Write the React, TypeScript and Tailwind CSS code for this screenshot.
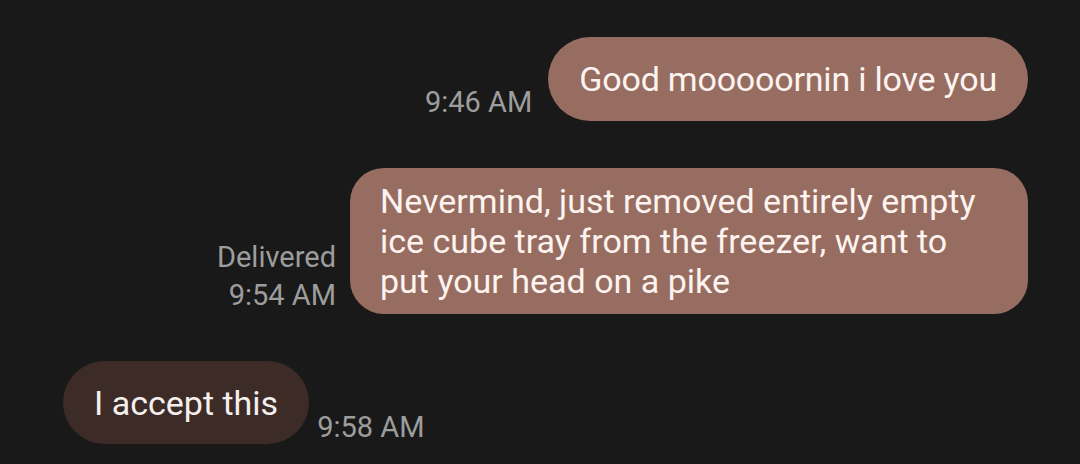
const sent = "bg-[#976d61] text-[#fdf3ef]";
const recv = "bg-[#3d2b28] text-[#f5efed]";

const Meta = ({ lines }: { lines: string[] }) => (
  <div className="flex flex-col items-end text-[29px] leading-[38px] text-[#9d9d9d]">
    {lines.map((l) => (
      <span key={l}>{l}</span>
    ))}
  </div>
);

export default function App() {
  return (
    <div
      className="w-[1080px] h-[464px] overflow-hidden bg-[#191919] pt-[37px] flex flex-col gap-[47px]"
      style={{ fontFamily: "Roboto, 'Noto Sans', sans-serif" }}
    >
      <div className="flex justify-end items-end gap-[16px] pr-[52px]">
        <Meta lines={["9:46 AM"]} />
        <div className={`${sent} min-h-[84px] flex items-center rounded-full px-[31px] py-[13px] text-[34px] leading-[40px] tracking-[-0.2px]`}>
          Good mooooornin i love you
        </div>
      </div>

      <div className="flex justify-end items-end gap-[14px] pr-[52px]">
        <Meta lines={["Delivered", "9:54 AM"]} />
        <div className={`${sent} w-[678px] min-h-[84px] flex items-center rounded-[34px] px-[30px] py-[13px] text-[34px] leading-[40px]`}>
          Nevermind, just removed entirely empty ice cube tray from the freezer, want to put your head on a pike
        </div>
      </div>

      <div className="flex justify-start items-end gap-[8px] pl-[63px]">
        <div className={`${recv} min-h-[83px] flex items-center rounded-full px-[31px] py-[13px] text-[34px] leading-[40px]`}>
          I accept this
        </div>
        <div className="mb-[-2px]">
          <Meta lines={["9:58 AM"]} />
        </div>
      </div>
    </div>
  );
}
